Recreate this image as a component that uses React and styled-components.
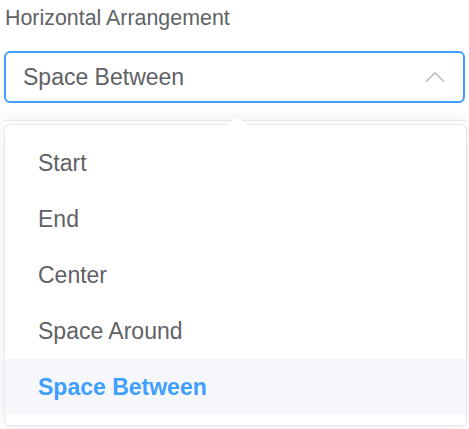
import styled, { createGlobalStyle } from 'styled-components'

const GlobalStyle = createGlobalStyle`
  body {
    margin: 0;
    background: #ffffff;
    font-family: "Liberation Sans", Arial, sans-serif;
  }
`

const Wrapper = styled.div`
  width: 469px;
  height: 429px;
  padding: 0 4px;
  box-sizing: border-box;
  overflow: hidden;
`

const Label = styled.div`
  font-size: 21.4px;
  line-height: 36px;
  color: #606266;
  padding-left: 1px;
  margin-bottom: 15px;
`

const Input = styled.div`
  height: 52px;
  width: 461px;
  box-sizing: border-box;
  border: 2px solid #409eff;
  border-radius: 6px;
  display: flex;
  align-items: center;
  justify-content: space-between;
  padding: 0 18px 0 17px;
  font-size: 23px;
  color: #606266;
`

const Popper = styled.div`
  position: relative;
  margin-top: 17px;
  width: 463px;
  margin-left: -1px;
  border-top: 1px solid #e4e7ed;
  padding-top: 3px;
  box-shadow: 0 -6px 14px rgba(0, 0, 0, 0.035);
`

const Arrow = styled.div`
  position: absolute;
  top: -6px;
  left: 223px;
  width: 0;
  height: 0;
  border-left: 11px solid transparent;
  border-right: 11px solid transparent;
  border-bottom: 10px solid #ebeef5;

  &::after {
    content: '';
    position: absolute;
    left: -10px;
    top: 1px;
    border-left: 10px solid transparent;
    border-right: 10px solid transparent;
    border-bottom: 9px solid #ffffff;
  }
`

const Card = styled.div`
  margin-left: 1px;
  width: 463px;
  height: 302px;
  box-sizing: border-box;
  border: 1px solid #e4e7ed;
  border-radius: 6px;
  background: #ffffff;
  padding: 10px 0 0;
  box-shadow: 0 2px 12px rgba(0, 0, 0, 0.06);
`

const Item = styled.div`
  height: 56px;
  display: flex;
  align-items: center;
  padding-left: 33px;
  font-size: 23px;
  color: ${(p) => (p.selected ? '#409eff' : '#606266')};
  font-weight: ${(p) => (p.selected ? 700 : 400)};
  background: ${(p) => (p.selected ? '#f5f7fa' : 'transparent')};
`

const options = ['Start', 'End', 'Center', 'Space Around', 'Space Between']

const App = () => {
  const value = 'Space Between'
  return (
    <Wrapper>
      <GlobalStyle />
      <Label>Horizontal Arrangement</Label>
      <Input>
        <span>{value}</span>
        <svg width="20" height="12" viewBox="0 0 20 12" fill="none">
          <path d="M1 10.5 L10 2 L19 10.5" stroke="#b4b8bf" strokeWidth="1.5" />
        </svg>
      </Input>
      <Popper>
        <Arrow />
        <Card>
          {options.map((o) => (
            <Item key={o} selected={o === value}>{o}</Item>
          ))}
        </Card>
      </Popper>
    </Wrapper>
  )
}

export default App
